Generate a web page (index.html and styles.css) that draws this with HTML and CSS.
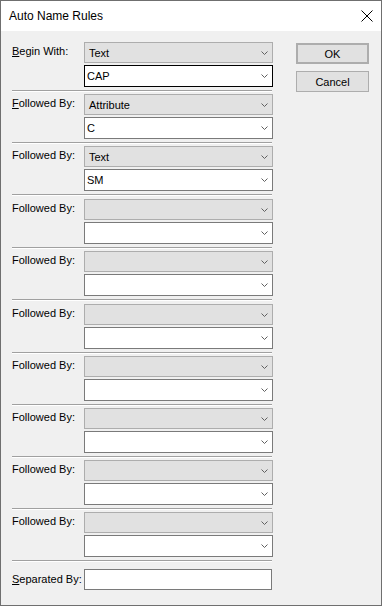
FILE: index.html
```html
<!DOCTYPE html>
<html lang="en">
<head>
    <meta charset="UTF-8">
    <title>Auto Name Rules</title>
    <link rel="stylesheet" href="styles.css">
</head>
<body>
    <div class="window">
        <div class="titlebar">
            <span class="title">Auto Name Rules</span>
            <svg class="close" width="12" height="12" viewBox="0 0 12 12">
                <path d="M0.5 0.5 L11.5 11.5 M11.5 0.5 L0.5 11.5" stroke="#000" stroke-width="1" fill="none"/>
            </svg>
        </div>
        <div class="content">
            <div class="rules" id="rules"></div>
            <div class="buttons">
                <button class="default">OK</button>
                <button>Cancel</button>
            </div>
        </div>
    </div>

    <script>
        const chevron = '<svg width="7" height="4" viewBox="0 0 7 4"><path d="M0.5 0.5 L3.5 3.5 L6.5 0.5" stroke="#606060" fill="none"/></svg>';
        const rules = [
            { label: '<u>B</u>egin With:', type: 'Text', value: 'CAP', focus: true },
            { label: '<u>F</u>ollowed By:', type: 'Attribute', value: 'C' },
            { label: 'Followed By:', type: 'Text', value: 'SM', wide: true },
            { label: 'Followed By:', type: '', value: '' },
            { label: 'Followed By:', type: '', value: '', wide: true },
            { label: 'Followed By:', type: '', value: '' },
            { label: 'Followed By:', type: '', value: '' },
            { label: 'Followed By:', type: '', value: '' },
            { label: 'Followed By:', type: '', value: '' },
            { label: 'Followed By:', type: '', value: '' }
        ];
        let html = '';
        for (let r of rules) {
            html += '<div class="rule">' +
                '<div class="label">' + r.label + '</div>' +
                '<div class="fields">' +
                '<div class="combo"><span>' + r.type + '</span>' + chevron + '</div>' +
                '<div class="combo edit' + (r.focus ? ' focus' : '') + '"><span>' + r.value + '</span>' + chevron + '</div>' +
                '</div></div>' +
                '<div class="sep' + (r.wide ? ' wide' : '') + '"></div>';
        }
        html += '<div class="rule separated"><div class="label"><u>S</u>eparated By:</div><div class="textbox"></div></div>';
        document.getElementById("rules").innerHTML = html;
    </script>
</body>
</html>
```

FILE: styles.css
```css
html, body {
    margin: 0;
    padding: 0;
}
.window {
    width: 382px;
    height: 606px;
    box-sizing: border-box;
    border: 1px solid #6f6f6f;
    background: #f0f0f0;
    font-family: "Liberation Sans", Arial, sans-serif;
    font-size: 11px;
    color: #000;
}
.titlebar {
    height: 30px;
    background: #fff;
    display: flex;
    align-items: center;
    justify-content: space-between;
    padding: 0 8px 0 8px;
}
.title {
    font-size: 12px;
}
.content {
    display: flex;
    padding: 11px 0 0 11px;
}
.rules {
    width: 261px;
    display: flex;
    flex-direction: column;
}
.rule {
    display: flex;
}
.label {
    width: 72px;
    padding-top: 3px;
}
.fields {
    width: 189px;
    display: flex;
    flex-direction: column;
    gap: 2px;
}
.combo {
    height: 21px;
    box-sizing: border-box;
    border: 1px solid #adadad;
    background: #e1e1e1;
    display: flex;
    align-items: center;
    justify-content: space-between;
    padding: 0 4px 0 4px;
}
.combo.edit {
    height: 22px;
    background: #fff;
    border-color: #7a7a7a;
    padding-left: 2px;
}
.combo.focus {
    border-color: #000;
}
.sep {
    margin: 3px 1px 2px 0;
    border-top: 1px solid #a0a0a0;
    border-bottom: 1px solid #fff;
}
.sep.wide {
    margin-bottom: 3px;
}
.separated {
    margin-top: 5px;
}
.separated .label {
    padding-top: 4px;
}
.textbox {
    width: 188px;
    height: 21px;
    box-sizing: border-box;
    border: 1px solid #7a7a7a;
    background: #fff;
}
.buttons {
    margin-left: 23px;
    padding-top: 1px;
    display: flex;
    flex-direction: column;
    gap: 7px;
}
button {
    width: 73px;
    height: 21px;
    box-sizing: border-box;
    border: 1px solid #adadad;
    background: #e1e1e1;
    font-family: inherit;
    font-size: 11px;
    color: #000;
    padding: 0;
}
button.default {
    border: 2px solid #adadad;
}
```
